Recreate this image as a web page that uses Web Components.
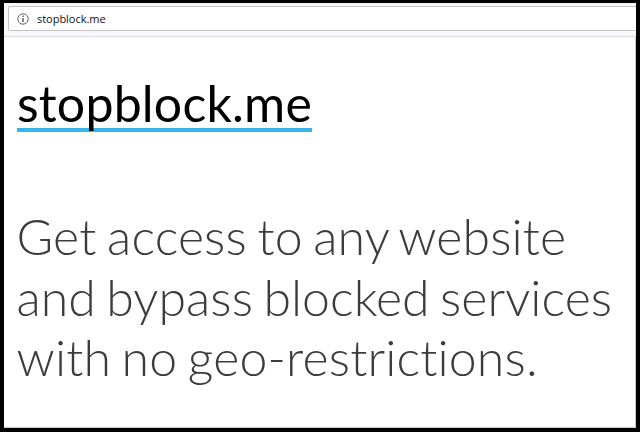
<!DOCTYPE html>
<html lang="en"><head><meta charset="utf-8"><title>stopblock.me</title>
<style>html,body{margin:0;height:100%;background:#000}</style></head><body>
<browser-frame><address-bar slot="bar">stopblock.me</address-bar>
<site-hero><span slot="brand">stopblock.me</span><span slot="l1">Get access to any website</span><span slot="l2">and bypass blocked services</span><span slot="l3">with no geo-restrictions.</span></site-hero></browser-frame>
<script>
const define=(name,html)=>customElements.define(name,class extends HTMLElement{constructor(){super();this.attachShadow({mode:'open'}).innerHTML=html}});
define('browser-frame',`<style>:host{display:block;box-sizing:border-box;width:640px;height:432px;border:4px solid #000;border-top-width:3px;background:#fff;overflow:hidden;box-shadow:inset -1px -1px #ccc}</style><slot name="bar"></slot><slot></slot>`);
define('address-bar',`<style>:host{display:block;box-sizing:border-box;height:34px;padding:3px 0 0 4px;background:#f8f7f9;border-bottom:1px solid #dddce0;font:11px "Open Sans",sans-serif;letter-spacing:-.03px;color:#111}
.field{display:flex;align-items:center;gap:8px;box-sizing:border-box;height:25px;padding-left:8px;background:#fff;border:1px solid #c4c3c8;border-right:0;border-radius:2px 0 0 2px}svg{display:block}</style><div class="field"><svg width="12" height="12" viewBox="0 0 12 12"><circle cx="6" cy="6" r="5.2" fill="none" stroke="#666"/><path d="M6 5v4M6 2.6v1.3" stroke="#555" stroke-width="1.4"/></svg><span><slot></slot></span></div>`);
define('site-hero',`<style>:host{display:block;padding:38px 0 0 13px;font-family:Lato,sans-serif;font-variant-ligatures:none}
h1{margin:0;width:max-content;font-size:50px;letter-spacing:.2px;font-weight:400;line-height:56px;height:53px;color:#000;border-bottom:4px solid #39b3ec}
p{margin:74px 0 0;font-size:50px;font-weight:300;line-height:60.5px;color:#3c3c3e;letter-spacing:.15px;word-spacing:-3.2px;white-space:nowrap}p span{display:block;width:max-content;margin-left:-.5px}p span:nth-child(2){letter-spacing:.05px}</style><h1><slot name="brand"></slot></h1><p><span><slot name="l1"></slot></span><span><slot name="l2"></slot></span><span><slot name="l3"></slot></span></p>`);
</script></body></html>
